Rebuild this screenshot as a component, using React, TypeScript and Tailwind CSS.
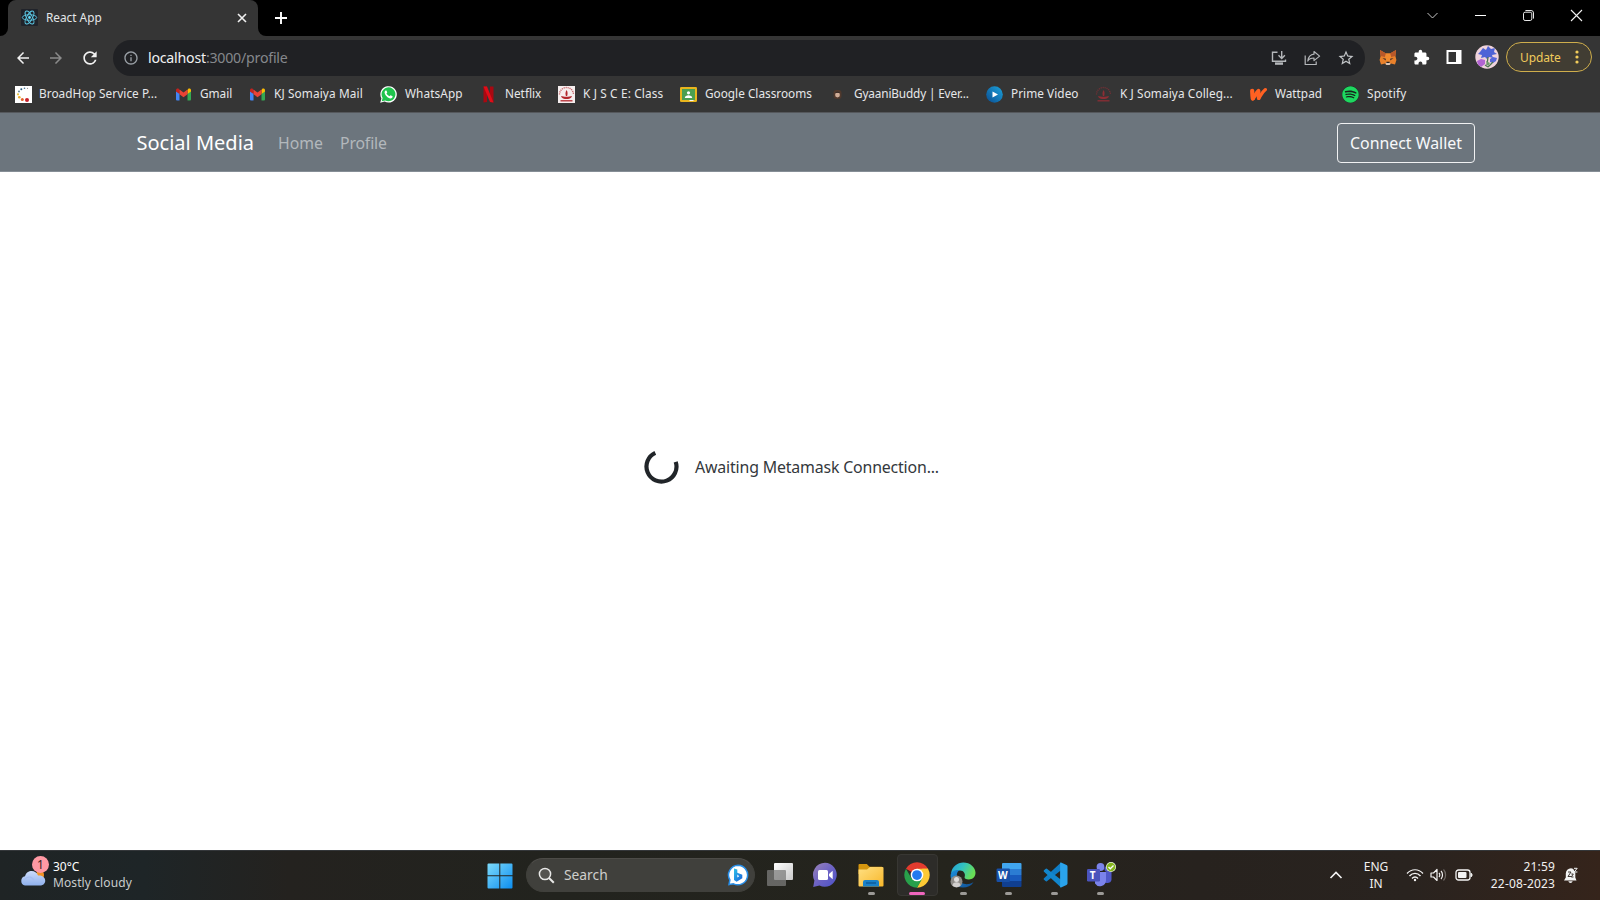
import type { ReactNode } from 'react';
import { MdArrowBack, MdArrowForward, MdRefresh, MdInfoOutline, MdStarBorder, MdExtension } from 'react-icons/md';
import { FaSpotify } from 'react-icons/fa';

function ReactLogo() {
  return (
    <svg viewBox="0 0 17 17" className="size-[17px] shrink-0">
      <rect width="17" height="17" rx="1" fill="#20232a" />
      <g fill="none" stroke="#5ccbe8" strokeWidth=".9">
        <ellipse cx="8.5" cy="8.5" rx="7.2" ry="2.8" />
        <ellipse cx="8.5" cy="8.5" rx="7.2" ry="2.8" transform="rotate(60 8.5 8.5)" />
        <ellipse cx="8.5" cy="8.5" rx="7.2" ry="2.8" transform="rotate(120 8.5 8.5)" />
      </g>
      <circle cx="8.5" cy="8.5" r="1.4" fill="#61dafb" />
    </svg>
  );
}

function TabStrip() {
  return (
    <div className="flex h-9 bg-black">
      <div className="flex w-2 items-end bg-[#353535]">
        <div className="h-full w-2 rounded-br-lg bg-black" />
      </div>
      <div className="flex h-9 w-[250px] items-center rounded-t-lg bg-[#353535] pr-[10px] pb-px pl-[13px]">
        <ReactLogo />
        <span className="ml-2 grow text-[11.8px] text-[#e4e6e8]">React App</span>
        <svg viewBox="0 0 12 12" className="size-3" stroke="#f1f1f1" strokeWidth="1.6">
          <path d="M2 2l8 8M10 2l-8 8" />
        </svg>
      </div>
      <div className="flex w-2 bg-[#353535]">
        <div className="h-full w-2 rounded-bl-lg bg-black" />
      </div>
      <svg viewBox="0 0 14 14" className="mt-[11px] ml-2 size-[14px]" stroke="#fff" strokeWidth="1.9">
        <path d="M7 1v12M1 7h12" />
      </svg>
      <div className="mr-[17px] ml-auto flex h-[31px] items-center gap-[35px]">
        <svg viewBox="0 0 13 13" className="size-[13px]" fill="none" stroke="#c6c6c6">
          <path d="M1.5 4l5 5 5-5" />
        </svg>
        <svg viewBox="0 0 13 13" className="size-[13px]" fill="none" stroke="#fff">
          <path d="M1 6.5h11" />
        </svg>
        <svg viewBox="0 0 13 13" className="size-[13px]" fill="none" stroke="#e8e8e8">
          <rect x="1.5" y="3.2" width="8.3" height="8.3" rx="1.6" />
          <path d="M3.4 1.5h5.6a2.5 2.5 0 0 1 2.5 2.5v5.6" />
        </svg>
        <svg viewBox="0 0 13 13" className="size-[13px]" fill="none" stroke="#f2f2f2" strokeWidth="1.1">
          <path d="M1 1l11 11M12 1L1 12" />
        </svg>
      </div>
    </div>
  );
}

function MetaMask() {
  return (
    <svg viewBox="0 0 18 17" className="h-[17px] w-[18px]">
      <path d="M1 1l6 3.5h4L17 1l-.6 6 1 4-1.4 4.5-4-1-1.5 1.5h-3L6 14.500l-4 1L.6 11l1-4z" fill="#e9812b" />
      <path d="M1 1l6 3.500L6 8 1.600 7zM17 1l-6 3.500L12 8l4.400-1z" fill="#b8582a" />
      <path d="M7 4.500h4L12 8l-1.500 4.500h-3L6 8z" fill="#f08a2e" />
      <path d="M3.500 9.300l3 .3.500 1.800zM14.500 9.300l-3 .3-.5 1.800z" fill="#3c2d2b" />
      <path d="M7 13.200h4l.3 2-.9.900H7.600l-.9-.9z" fill="#d9c6b8" />
      <path d="M7.500 12.800h3l.2 1.300H7.300z" fill="#2a211e" />
    </svg>
  );
}

function Avatar() {
  return (
    <svg viewBox="0 0 24 24" className="size-[24px]">
      <clipPath id="avatar"><circle cx="12" cy="12" r="11.700" /></clipPath>
      <g clipPath="url(#avatar)">
        <rect width="24" height="24" fill="#efd3dc" />
        <path d="M5 7l3-4 3 2 2-4 3 3 4-1-1 4 3 2-5 1 1 3-4-1-2 2-2-2-4 1 1-3-4-1z" fill="#4e63d6" />
        <path d="M15 14l3-2 4 1-1 3-3 2-3-1z" fill="#5666dc" />
        <path d="M2 16l4-2 4 1v4l-4 3-3-2z" fill="#b264d2" />
        <path d="M13 12l-1 8M18 17l-5 5M10 20l3 2" stroke="#4b7450" strokeWidth="1.300" fill="none" />
        <path d="M11 16l4 2-2 3z" fill="#6b9b68" />
      </g>
    </svg>
  );
}

function Toolbar() {
  return (
    <div className="flex h-10 items-center bg-[#353535]">
      <MdArrowBack className="mt-[3px] ml-[14px] size-[18px] text-[#f1f1f1]" />
      <MdArrowForward className="mt-[3px] ml-[15px] size-[18px] text-[#8b8b8b]" />
      <MdRefresh className="mt-[3px] ml-[15px] size-5 text-[#f1f1f1]" />
      <div className="mt-1 ml-[13px] flex h-9 w-[1252px] items-center rounded-full bg-[#202124] pr-[10px] pl-[10px]">
        <MdInfoOutline className="size-4 text-[#9aa0a6]" />
        <div className="ml-[9px] grow text-[14.200px] tracking-[-0.23px] text-[#85888c]">
          <span className="text-[#f0f1f2]">localhost</span>:3000/profile
        </div>
        <svg viewBox="0 0 16 16" className="size-4" fill="none" stroke="#b4b7ba" strokeWidth="1.400">
          <path d="M6.500 2.200H1.500v9h13V9.500M10.700 1v7.200M7.500 5.300l3.200 3.200 3.200-3.200" />
          <path d="M4 13.600h8" strokeWidth="2.400" />
        </svg>
        <svg viewBox="0 0 17 16" className="ml-[17px] h-4 w-[17px]" fill="none" stroke="#b4b7ba" strokeWidth="1.200">
          <path d="M1.200 5.500v9h11v-3" />
          <path d="M10 1.500l5.600 4.600L10 10.600V8c-3 0-5 .8-6.200 3C4.300 7.200 6.500 4.600 10 4.200z" strokeLinejoin="round" />
        </svg>
        <MdStarBorder className="ml-[16px] size-[18px] text-[#c2c5c8]" />
      </div>
      <div className="mt-[2px] ml-[14px] flex items-center">
        <MetaMask />
        <MdExtension className="ml-[16px] size-[17px] text-white" />
        <svg viewBox="0 0 16 16" className="ml-[16px] size-4">
          <path d="M.5 1h15v14H.5zM2.500 3v10H10V3z" fill="#fff" fillRule="evenodd" />
        </svg>
        <div className="ml-[13px]"><Avatar /></div>
        <div className="ml-[7px] flex h-[30px] w-[86px] items-center rounded-full border-[1.500px] border-[#cfae4c] bg-[#413d33] pl-[13px]">
          <span className="w-10 pt-px text-[12px] tracking-[-0.1px] text-[#f0cb5c]">Update</span>
          <svg viewBox="0 0 4 14" className="ml-[15px] h-[14px] w-1" fill="#f3cd5b">
            <circle cx="2" cy="2" r="1.600" /><circle cx="2" cy="7" r="1.600" /><circle cx="2" cy="12" r="1.600" />
          </svg>
        </div>
      </div>
    </div>
  );
}

const icon = 'size-[17px] shrink-0';

function Gmail() {
  return (
    <svg viewBox="0 0 17 17" className={icon}>
      <path d="M1 5v8.500a1 1 0 0 0 1 1h2.500V7.600z" fill="#4285f4" />
      <path d="M16 5v8.500a1 1 0 0 1-1 1h-2.500V7.600z" fill="#34a853" />
      <path d="M12.500 4.200v3.900L16 5.500V4.400c0-1.800-1.800-2.300-2.900-1.400z" fill="#fbbc04" />
      <path d="M4.500 4.200v3.900L1 5.500V4.400C1 2.600 2.800 2.100 3.900 3z" fill="#c5221f" />
      <path d="M4.500 8.200V3.500l4 3 4-3v4.700l-4 3z" fill="#ea4335" />
    </svg>
  );
}

function BroadHop() {
  return (
    <svg viewBox="0 0 17 17" className={icon}>
      <rect width="17" height="17" fill="#fff" />
      <circle cx="12.500" cy="2.300" r=".6" fill="#888" /><circle cx="9.500" cy="2.200" r=".8" fill="#3d6f8f" />
      <circle cx="6.300" cy="3.300" r="1" fill="#285c7c" /><circle cx="4" cy="5.400" r=".9" fill="#58798a" />
      <circle cx="3" cy="8.300" r="1.100" fill="#e8c43d" /><circle cx="4.300" cy="11.300" r="1.300" fill="#edae2e" />
      <circle cx="7.300" cy="13.500" r="1.500" fill="#e3622a" /><circle cx="12" cy="14" r="2" fill="#c8202c" />
    </svg>
  );
}

function WhatsApp() {
  return (
    <svg viewBox="0 0 24 24" className={icon}>
      <path d="M.3 23.700L2 17.500A11.600 11.600 0 1 1 6.600 22z" fill="#fff" />
      <path d="M2.400 21.600l1.300-4.700A9.800 9.800 0 1 1 7.300 20.300z" fill="#1fc34d" />
      <path d="M8.300 6.400c-.5 0-2 .9-1.800 3 .3 3 4.600 7.800 8.300 8.100 1.900.1 3-1.100 3-2.700 0-.4-2.700-1.700-3-1.600-.5.100-.9 1.300-1.400 1.300-1.200-.1-4.100-2.900-4.200-3.800 0-.5 1-.9 1-1.500 0-.4-1-2.800-1.300-2.800z" fill="#fff" />
    </svg>
  );
}

function Netflix() {
  return (
    <svg viewBox="0 0 17 17" className={icon}>
      <path d="M3.500.5H7V16l-3.500.5z" fill="#a90811" />
      <path d="M10 .5h3.500v16L10 16z" fill="#a90811" />
      <path d="M3.500.5H7l6.500 16L10 16z" fill="#e00d18" />
    </svg>
  );
}

function College({ plain }: { plain?: boolean }) {
  const c = plain ? '#8c2e34' : '#b3282d';
  return (
    <svg viewBox="0 0 17 17" className={icon}>
      {!plain && <rect width="17" height="17" fill="#f6eeee" />}
      <path d="M1.500 8.500a7 7 0 0 1 14 0" fill="none" stroke={c} strokeWidth="1.300" strokeDasharray="1.200 .8" opacity=".7" />
      <path d="M8.500 4c1.500 2.200 1.200 4 .6 6H7.900c-.6-2-.7-3.500.6-6z" fill={c} />
      <path d="M3 10c3 1 8 1 11 0-.7 2.200-2.500 2.900-4 3.100H7c-1.500-.2-3.300-.9-4-3.100z" fill={c} />
      <path d="M2.500 14.800h12" stroke={c} strokeWidth="1.300" />
    </svg>
  );
}

function Classroom() {
  return (
    <svg viewBox="0 0 17 17" className={icon}>
      <rect y="1" width="17" height="15" rx="1.300" fill="#e9b51d" />
      <rect x="2" y="3" width="13" height="11" fill="#4b9f50" />
      <circle cx="8.500" cy="6.800" r="1.600" fill="#fff" />
      <path d="M4.800 12c0-3.800 7.400-3.800 7.400 0z" fill="#fff" />
      <path d="M9.500 14h4v1h-4z" fill="#f6f6f6" />
    </svg>
  );
}

function Gyaani() {
  return (
    <svg viewBox="0 0 17 17" className={icon}>
      <rect x="4.500" y="4" width="8" height="9" rx="3" fill="#50392d" />
      <circle cx="8.500" cy="9" r="2.400" fill="#d0ac97" />
      <path d="M6 6.800c1.500-1.500 3.500-1.500 5 0z" fill="#2b211e" />
    </svg>
  );
}

function Prime() {
  return (
    <svg viewBox="0 0 17 17" className={icon}>
      <defs><linearGradient id="prime" x1="0" y1="1" x2="1" y2="0"><stop stopColor="#0a4c91" /><stop offset="1" stopColor="#1ca4dc" /></linearGradient></defs>
      <circle cx="8.500" cy="8.500" r="8.300" fill="url(#prime)" />
      <path d="M6.500 5.500l5.500 3-5.500 3z" fill="#fff" />
    </svg>
  );
}

function Wattpad() {
  return (
    <svg viewBox="0 0 17 17" className={icon} fill="none" stroke="#ff6122" strokeLinecap="round" strokeLinejoin="round">
      <path d="M2.200 4.800c.1 3 .1 5.500.6 7.700" strokeWidth="4.200" />
      <path d="M3 12.500C5 10 6.500 6.300 8.500 4.600c.3 2.500-.1 5.200.2 7.600" strokeWidth="3.700" />
      <path d="M8.800 12.200c2.200-3 3.800-6.400 6.600-8.600" strokeWidth="3.200" />
    </svg>
  );
}

function Spotify() {
  return (
    <div className="flex size-[17px] items-center justify-center rounded-full bg-[#17231b]">
      <FaSpotify className="size-[17px] text-[#1ed760]" />
    </div>
  );
}

function Bookmark({ w, glyph, children }: { w: string; glyph: ReactNode; children: ReactNode }) {
  return (
    <div className={`flex shrink-0 items-center gap-2 whitespace-nowrap ${w}`}>
      {glyph}
      <span>{children}</span>
    </div>
  );
}

function Bookmarks() {
  return (
    <div className="flex h-[37px] items-center border-b border-[#55585c] bg-[#353535] pl-[15px] text-[11.800px] text-[#e6e7e9]">
      <Bookmark w="w-[160px]" glyph={<BroadHop />}><span className="-ml-px tracking-[0.06px]">BroadHop Service P...</span></Bookmark>
      <Bookmark w="w-[74px]" glyph={<Gmail />}>Gmail</Bookmark>
      <Bookmark w="w-[131px]" glyph={<Gmail />}><span className="tracking-[0.12px]">KJ Somaiya Mail</span></Bookmark>
      <Bookmark w="w-[100px]" glyph={<WhatsApp />}><span className="tracking-[0.1px]">WhatsApp</span></Bookmark>
      <Bookmark w="w-[78px]" glyph={<Netflix />}>Netflix</Bookmark>
      <Bookmark w="w-[122px]" glyph={<College />}><span className="tracking-[0.15px]">K J S C E: Class</span></Bookmark>
      <Bookmark w="w-[149px]" glyph={<Classroom />}>Google Classrooms</Bookmark>
      <Bookmark w="w-[157px]" glyph={<Gyaani />}><span className="tracking-[-0.15px]">GyaaniBuddy | Ever...</span></Bookmark>
      <Bookmark w="w-[109px]" glyph={<Prime />}><span className="tracking-[0.05px]">Prime Video</span></Bookmark>
      <Bookmark w="w-[155px]" glyph={<College plain />}><span className="tracking-[0.1px]">K J Somaiya Colleg...</span></Bookmark>
      <Bookmark w="w-[92px]" glyph={<Wattpad />}>Wattpad</Bookmark>
      <Bookmark w="w-[80px]" glyph={<Spotify />}><span className="tracking-[0.15px]">Spotify</span></Bookmark>
    </div>
  );
}

function SiteNav() {
  return (
    <div className="flex h-[59px] items-center border-b border-[#868e96] bg-[#6c757d] pr-[125px] pl-[136px]">
      <span className="w-[142px] pt-[2px] pl-[0.500px] text-[20px] text-white">Social Media</span>
      <span className="w-[62px] pt-[4px] text-[15.800px] text-[#b3b8bc]">Home</span>
      <span className="pt-[4px] text-[15.800px] tracking-[-0.15px] text-[#b3b8bc]">Profile</span>
      <button className="mt-[2px] ml-auto h-10 w-[138px] rounded-[4px] border border-[#f0f1f2] pt-[2px] text-[15.900px] text-[#f8f9fa]">
        Connect Wallet
      </button>
    </div>
  );
}

function Running({ active }: { active?: boolean }) {
  return <div className={active ? 'h-[3px] w-4 rounded-full bg-[#ef66bd]' : 'h-[3px] w-[7px] rounded-full bg-[#9c9a97]'} />;
}

function TaskButton({ children, running, active }: { children: ReactNode; running?: boolean; active?: boolean }) {
  return (
    <div className={`flex h-[42px] w-[41px] flex-col items-center rounded ${active ? 'border border-[#383733] bg-[#2d2c29] pt-[7px]' : 'pt-2'}`}>
      {children}
      <div className="mt-[4px]">{(running || active) && <Running active={active} />}</div>
    </div>
  );
}

const big = 'size-[26px] shrink-0';

function Start() {
  return (
    <svg viewBox="0 0 26 26" className={big}>
      <defs><linearGradient id="win" x1="0" y1="0" x2="26" y2="26" gradientUnits="userSpaceOnUse"><stop stopColor="#7fdcfb" /><stop offset="1" stopColor="#0a8cf0" /></linearGradient></defs>
      <path d="M.5 1.500a1 1 0 0 1 1-1h10.800v11.800H.5zM13.300.5h11.200a1 1 0 0 1 1 1v10.800H13.300zM.5 13.300h11.800v12.200H1.500a1 1 0 0 1-1-1zM13.300 13.300h12.200v11.200a1 1 0 0 1-1 1H13.300z" fill="url(#win)" />
    </svg>
  );
}

function Bing() {
  return (
    <svg viewBox="0 0 22 22" className="size-[22px]">
      <defs><linearGradient id="bing" x1="0" y1="0" x2="1" y2="1"><stop stopColor="#2cc2e8" /><stop offset="1" stopColor="#185fdc" /></linearGradient></defs>
      <path d="M11 1.200A9.800 9.800 0 1 1 6.500 19.800L2 20.500l.9-4.500A9.800 9.800 0 0 1 11 1.200z" fill="#fff" stroke="#288ee8" strokeWidth="1.500" />
      <path d="M7 4.500l3.300 1v3.200l5 2v3.600L9.600 17.700 7 16z" fill="url(#bing)" />
      <path d="M10.300 10.500l1.900 1.700-1.900 1.200z" fill="#fff" />
    </svg>
  );
}

function TaskView() {
  return (
    <svg viewBox="0 0 26 26" className={big}>
      <defs><linearGradient id="tv" x1="0" y1="0" x2="1" y2="1"><stop stopColor="#fff" /><stop offset="1" stopColor="#c9c9c9" /></linearGradient></defs>
      <rect x="7" y="1" width="19" height="17" rx="1" fill="url(#tv)" />
      <rect x="0" y="8" width="19" height="16" rx="1" fill="#7c7c7b" fillOpacity=".75" />
    </svg>
  );
}

function Chat() {
  return (
    <svg viewBox="0 0 26 26" className={big}>
      <defs><linearGradient id="chat" x1="0" y1="0" x2="1" y2="1"><stop stopColor="#9a83b8" /><stop offset=".5" stopColor="#6d63c4" /><stop offset="1" stopColor="#4b52c8" /></linearGradient></defs>
      <path d="M13 .8A12 12 0 1 1 7.500 23.600L1.200 25l1.200-6.500A12 12 0 0 1 13 .8z" fill="url(#chat)" />
      <rect x="6" y="8" width="10" height="10" rx="1.500" fill="#fff" />
      <path d="M17 12l3.700-3.300v8.600L17 14z" fill="#fff" />
    </svg>
  );
}

function Explorer() {
  return (
    <svg viewBox="0 0 26 26" className={big}>
      <defs><linearGradient id="folder" x1="0" y1="0" x2="1" y2="1"><stop stopColor="#ffe083" /><stop offset="1" stopColor="#f8b72a" /></linearGradient></defs>
      <path d="M.5 3a1 1 0 0 1 1-1h7.300l2.700 2.700H24V12H.5z" fill="#d5960f" />
      <path d="M.5 7.500H9L12 5h12.500a1 1 0 0 1 1 1v17.500a1 1 0 0 1-1 1h-23a1 1 0 0 1-1-1z" fill="url(#folder)" />
      <path d="M5 24.500V20a2 2 0 0 1 2-2h12a2 2 0 0 1 2 2v4.500z" fill="#1981c9" />
      <path d="M8 21h10" stroke="#0d5794" strokeWidth="1.300" />
    </svg>
  );
}

function Chrome() {
  return (
    <svg viewBox="0 0 48 48" className={big}>
      <path d="M24 24L3.650 12.250A23.500 23.500 0 0 1 44.350 12.250z" fill="#e33b2e" />
      <path d="M44.350 12.250A23.500 23.500 0 0 1 24 47.500L33.500 29V12.250z" fill="#fcc934" />
      <path d="M3.650 12.250A23.500 23.500 0 0 0 24 47.500L34.200 29.900 24 34 13.800 29.900z" fill="#28a04b" />
      <path d="M24 12.250h20.350L34 30z" fill="#fcc934" />
      <circle cx="24" cy="24" r="11.700" fill="#fff" />
      <circle cx="24" cy="24" r="9" fill="#2379ef" />
    </svg>
  );
}

function Edge() {
  return (
    <svg viewBox="0 0 26 26" className={big}>
      <defs>
        <linearGradient id="edge1" x1="0" y1="0" x2="1" y2=".4"><stop stopColor="#249ed8" /><stop offset=".5" stopColor="#32c2c0" /><stop offset="1" stopColor="#69de55" /></linearGradient>
        <linearGradient id="edge2" x1="0" y1="0" x2="1" y2="1"><stop stopColor="#1b8fdd" /><stop offset="1" stopColor="#104d91" /></linearGradient>
      </defs>
      <path d="M1 11.500C2 4.500 7.300.5 13.300.5c7 0 12.200 5 12.200 10.300 0 4.200-3 6.700-6.700 6.700-2.900 0-4.700-1.200-4.200-2.400 1.200-3-.7-6.600-4.600-6.600-4 0-7.400 1-9 3z" fill="url(#edge1)" />
      <path d="M.6 13C1.500 8.500 6 7.700 9.500 8.100c-2.700 2-3.500 5.400-1.700 9.100 2.700 5 9.700 6.600 15.700 3-2.500 3.700-6 5.300-10.500 5.300C6 25.500.2 20 .6 13z" fill="url(#edge2)" />
      <circle cx="6.500" cy="19.500" r="6" fill="#8f8c88" />
      <circle cx="6.500" cy="17.400" r="2.500" fill="#e0dddb" />
      <path d="M2.500 23.500c0-4.400 8-4.400 8 0-2 2.200-6 2.200-8 0z" fill="#d2cfcd" />
    </svg>
  );
}

function Word() {
  return (
    <div className="relative">
      <svg viewBox="0 0 26 26" className={big}>
        <path d="M6 2a1 1 0 0 1 1-1h17.500a1 1 0 0 1 1 1v5H6z" fill="#41a5ee" />
        <path d="M6 7h19.500v6H6z" fill="#2b7cd3" />
        <path d="M6 13h19.500v6H6z" fill="#185abd" />
        <path d="M6 19h19.500v5a1 1 0 0 1-1 1H7a1 1 0 0 1-1-1z" fill="#103f91" />
        <rect x=".5" y="6.500" width="13.500" height="13.500" rx="1.300" fill="#174fa7" />
      </svg>
      <span className="absolute top-[6px] left-[2px] text-[10px] leading-[14px] font-bold text-white">W</span>
    </div>
  );
}

function VsCode() {
  return (
    <svg viewBox="0 0 26 26" className={big}>
      <path d="M19 .5L2 16.200a1 1 0 0 0 0 1.500l1.500 1.400a1 1 0 0 0 1.400.1L20 7.500z" fill="#0f7dc5" />
      <path d="M19 25.500L2 9.800a1 1 0 0 1 0-1.500l1.500-1.400a1 1 0 0 1 1.400-.1L20 18.500z" fill="#1286cc" />
      <path d="M19 .5l5.500 2.600a1.500 1.500 0 0 1 1 1.400v17a1.500 1.500 0 0 1-1 1.400L19 25.500c-.5 0-.9-.5-.9-1V1.500c0-.5.4-1 .9-1z" fill="#2aa3ec" />
    </svg>
  );
}

function Teams() {
  return (
    <div className="relative">
      <svg viewBox="0 0 30 26" className="h-[26px] w-[30px]">
        <circle cx="21.500" cy="7" r="3" fill="#5059c9" />
        <path d="M17 10h8.500v7c0 3-2 4-4.500 4s-4-2-4-4z" fill="#5059c9" />
        <circle cx="14.500" cy="5" r="3.900" fill="#7b83eb" />
        <path d="M9 10h11v8.500a6 6 0 0 1-11 3z" fill="#7b83eb" />
        <rect x="1" y="7" width="13" height="12.500" rx="1.200" fill="#4b53bc" />
        <circle cx="25" cy="5" r="5" fill="#e9f3dc" />
        <circle cx="25" cy="5" r="4.300" fill="#84b51c" />
        <path d="M22.500 5l1.800 1.800 3.200-3.300" fill="none" stroke="#fff" strokeWidth="1.300" />
      </svg>
      <span className="absolute top-[6px] left-[4px] text-[10px] leading-[14px] font-bold text-white">T</span>
    </div>
  );
}

function Weather() {
  return (
    <div className="relative mt-[14px] ml-5 h-[22px] w-[27px]">
      <svg viewBox="0 0 27 22" className="h-[22px] w-[27px]">
        <defs><linearGradient id="cloud" x1="0" y1="0" x2="0" y2="1"><stop stopColor="#ccdcfb" /><stop offset="1" stopColor="#8fb0ec" /></linearGradient></defs>
        <circle cx="20" cy="10" r="4" fill="#f29225" />
        <path d="M5 20.500A4.700 4.700 0 0 1 5 11.300C6.500 4.500 16 4 18 10.500c9-1 9.500 10 2 10z" fill="url(#cloud)" />
        <path d="M4 15c4-5 9-3 10 1" fill="none" stroke="#a5bdf0" strokeWidth="1.200" />
      </svg>
      <div className="absolute -top-[9px] left-[12px] flex size-[17px] items-center justify-center rounded-full bg-[#ff99a4] text-[12px] text-[#351d20]">1</div>
    </div>
  );
}

function Taskbar() {
  return (
    <div className="flex h-[50px] border-t border-[#34373a] bg-[linear-gradient(90deg,#1f2425_0%,#1e2527_9%,#24221f_18%,#22231e_35%,#25241d_60%,#27221e_75%,#29231f_88%,#35241b_100%)]">
      <Weather />
      <div className="mt-[7px] ml-[6px] w-[434px] text-[12px] leading-[17px] text-[#c9cccd]">
        <div className="text-white">30°C</div>
        <div className="-mt-[0.600px] tracking-[0.1px]">Mostly cloudy</div>
      </div>
      <div className="mt-[12px]"><Start /></div>
      <div className="mt-[7px] ml-[13px] flex h-[34px] w-[229px] items-center rounded-full border border-t-[#4d4c48] border-[#40403c] bg-[#40403c] pr-[5px] pl-[11px]">
        <svg viewBox="0 0 17 17" className="size-[17px]" fill="#555450" stroke="#e8e8e7" strokeWidth="1.500">
          <circle cx="7" cy="7" r="5.600" /><path d="M11 11l4.800 4.800" strokeWidth="2" />
        </svg>
        <span className="ml-[9px] grow pt-px text-[13.800px] text-[#cfcfcc]">Search</span>
        <Bing />
      </div>
      <div className="mt-[3px] ml-1 flex gap-[4.900px]">
        <TaskButton><TaskView /></TaskButton>
        <TaskButton><Chat /></TaskButton>
        <TaskButton running><Explorer /></TaskButton>
        <TaskButton active><Chrome /></TaskButton>
        <TaskButton running><Edge /></TaskButton>
        <TaskButton running><Word /></TaskButton>
        <TaskButton running><VsCode /></TaskButton>
        <TaskButton running><Teams /></TaskButton>
      </div>
      <div className="ml-auto flex items-center pr-[21px] pb-px text-[#f2f1f0]">
        <svg viewBox="0 0 14 10" className="h-[10px] w-[14px]" fill="none" stroke="#f4f4f4" strokeWidth="1.600">
          <path d="M1.500 8L7 2.500 12.500 8" />
        </svg>
        <div className="ml-[18px] w-[30px] text-center text-[12px] leading-[17px]">ENG<br />IN</div>
        <svg viewBox="0 0 18 14" className="ml-[15px] h-[14px] w-[18px]" fill="none" stroke="#f3f3f3" strokeWidth="1.400">
          <path d="M1 5.500c4.500-5 11.500-5 16 0" strokeWidth="1.200" /><path d="M3.500 8c3.200-3.500 7.800-3.500 11 0" /><path d="M6 10.500c1.800-2 4.200-2 6 0" />
          <circle cx="9" cy="12" r="1.200" fill="#f3f3f3" stroke="none" />
        </svg>
        <svg viewBox="0 0 18 14" className="ml-[6px] h-[14px] w-[18px]" fill="none" stroke="#f3f3f3" strokeWidth="1.200">
          <path d="M1 5h2.500L7 1.500v11L3.500 9H1z" strokeLinejoin="round" />
          <path d="M9 5c1 1 1 3 0 4M11 3c2 2 2 6 0 8" /><path d="M13.500 1.500c2.800 3 2.800 8 0 11" stroke="#6f6a66" />
        </svg>
        <svg viewBox="0 0 18 12" className="ml-[7px] h-3 w-[18px]">
          <rect x="1" y="1" width="14" height="10" rx="2.500" fill="none" stroke="#f3f3f3" strokeWidth="1.300" />
          <rect x="3" y="3" width="8.500" height="6" rx="1" fill="#f3f3f3" />
          <path d="M16 4.200c1.400.4 1.400 3.200 0 3.600z" fill="#f3f3f3" stroke="#f3f3f3" />
        </svg>
        <div className="ml-[8px] w-[74px] text-right text-[12px] leading-[17px] tracking-[0.15px] whitespace-nowrap">21:59<br />22-08-2023</div>
        <svg viewBox="0 0 16 17" className="ml-[8px] h-[17px] w-4">
          <path d="M8 1.200a5.200 5.200 0 0 0-5.200 5.200v4L1 13.500h12.500l-1.200-3V6A5 5 0 0 0 8 1.200zM5.300 14.300a2.300 2.300 0 0 0 4.400 0z" fill="#f3f3f3" />
          <path d="M5 5h3L5 9.500h3.200M8.300 7h2L8.300 10h2.200" fill="none" stroke="#2c241f" strokeWidth=".9" />
          <path d="M10 .8h4.500v5H12z" fill="#30241d" />
          <path d="M11 1.300h3.200L11.200 5h3.200" fill="none" stroke="#f3f3f3" />
        </svg>
      </div>
    </div>
  );
}

export default function App() {
  return (
    <div className="flex h-[900px] w-[1600px] flex-col overflow-hidden bg-white font-['Noto_Sans',sans-serif]">
      <TabStrip />
      <Toolbar />
      <Bookmarks />
      <SiteNav />
      <main className="flex grow items-start pt-[277px] pl-[644px]">
        <div className="flex items-center gap-4">
          <svg viewBox="0 0 35 35" className="size-[35px]" fill="none" stroke="#212529" strokeWidth="4.200">
            <path d="M11.300 3.900A15 15 0 1 0 31.700 12.800" />
          </svg>
          <span className="pt-[2px] text-[15.900px] tracking-[-0.17px] text-[#34383c]">Awaiting Metamask Connection...</span>
        </div>
      </main>
      <Taskbar />
    </div>
  );
}
